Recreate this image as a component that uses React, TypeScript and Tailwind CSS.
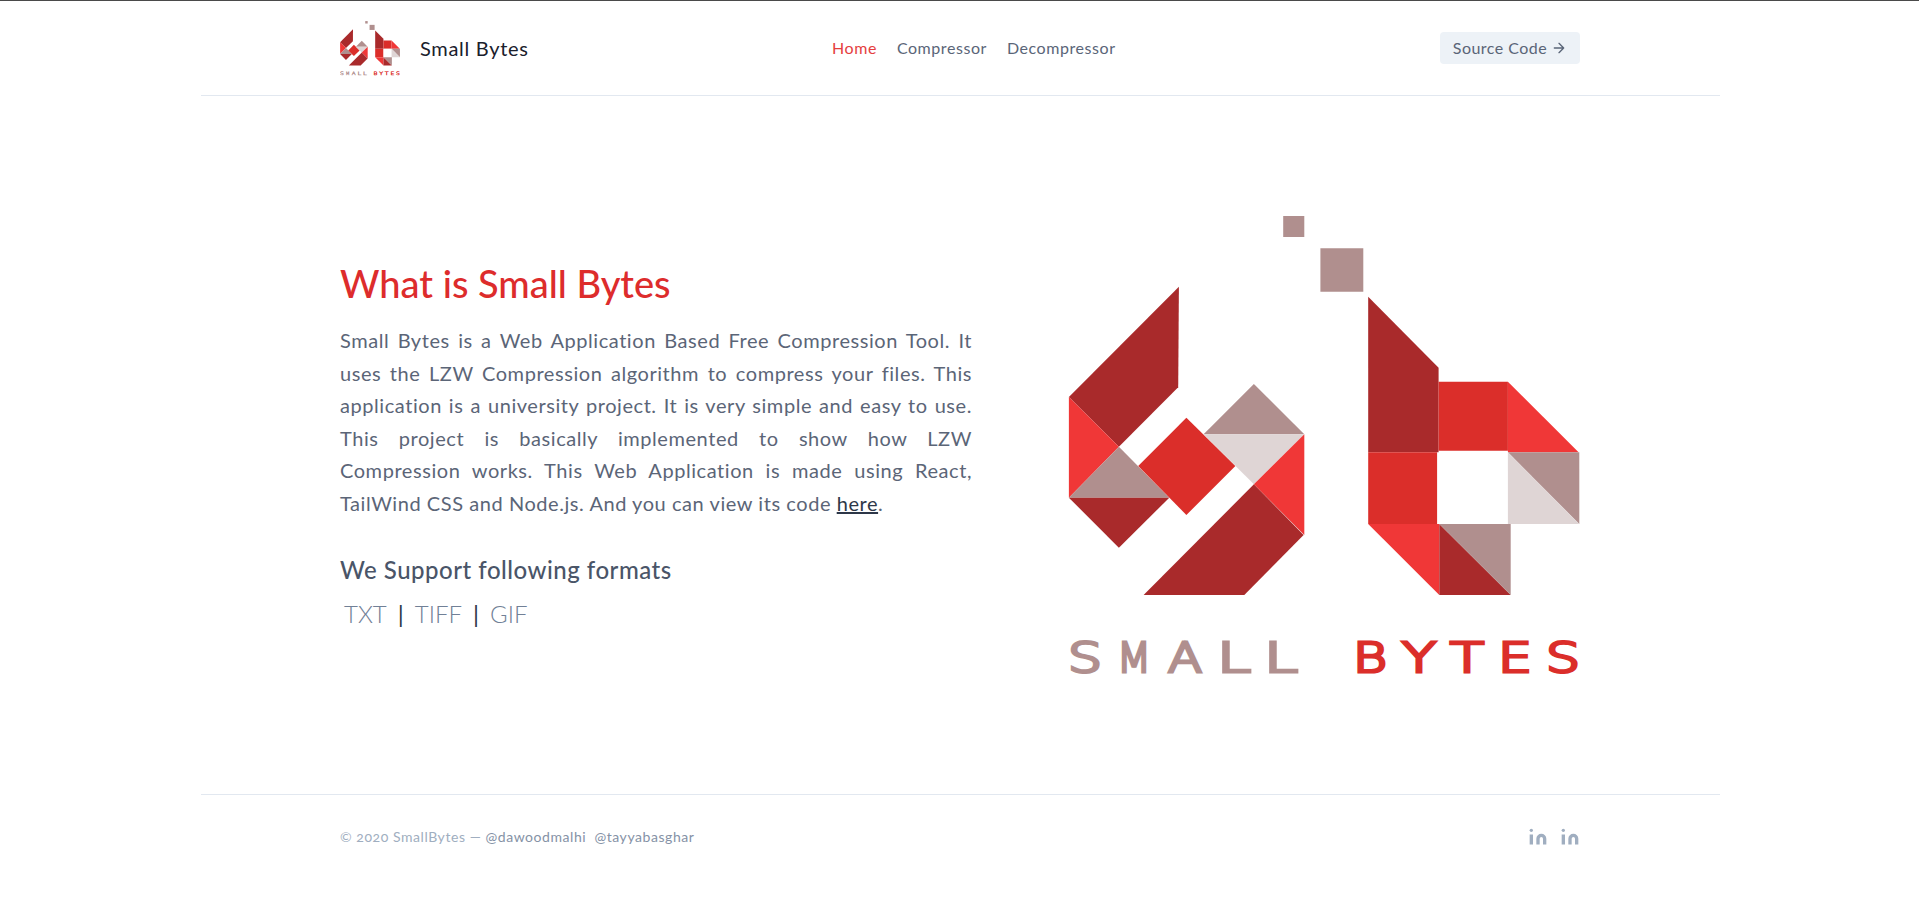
const dark = '#a92a2b'
const red = '#db2e2a'
const bright = '#f03737'
const taupe = '#b08f8e'
const pale = '#dfd5d5'

const shapes: [string, string][] = [
  [dark, '1178.9,286.7 1178.2,387.3 1118.9,446.7 1068.9,397'],
  [bright, '1068.9,397 1118.9,446.7 1068.9,497.7'],
  [taupe, '1118.9,446.7 1169.3,497.7 1068.9,497.7'],
  [dark, '1068.9,497.7 1169.3,497.7 1118.9,547.7'],
  [red, '1186.4,417.7 1235.4,466 1186.4,515 1138.2,466'],
  [taupe, '1253.9,384 1304.3,434.3 1203.6,434.3'],
  [pale, '1203.6,434.3 1304.3,434.3 1253.9,484.3'],
  [bright, '1304.3,434.3 1304.3,535 1253.9,484.3'],
  [dark, '1253.9,484.3 1303.6,535 1244.3,595 1143.6,595'],
  [dark, '1368.2,296.7 1438.6,367.7 1438.6,452.3 1368.2,452.3'],
  [red, '1438.6,381.7 1507.9,381.7 1507.9,450.7 1438.6,450.7'],
  [bright, '1507.9,381.7 1578.6,452.3 1507.9,452.3'],
  [taupe, '1507.9,452.3 1579.3,452.3 1579.3,524'],
  [pale, '1507.9,452.3 1579.3,524 1507.9,524'],
  [red, '1368.2,452.3 1437.1,452.3 1437.1,524 1368.2,524'],
  [bright, '1368.2,524 1439.3,524 1439.3,595'],
  [dark, '1439.3,524 1510.7,595 1439.3,595'],
  [taupe, '1439.3,524 1510.7,524 1510.7,595'],
  [taupe, '1283.2,216 1304.3,216 1304.3,237 1283.2,237'],
  [taupe, '1320.4,248.3 1363.3,248.3 1363.3,291.7 1320.4,291.7'],
]

const letters: [string, number, string][] = [
  ['S', 1068, taupe],
  ['M', 1117, taupe],
  ['A', 1168, taupe],
  ['L', 1217, taupe],
  ['L', 1264, taupe],
  ['B', 1353, red],
  ['Y', 1402, red],
  ['T', 1450, red],
  ['E', 1498, red],
  ['S', 1546, red],
]

function Logo({ className }: { className: string }) {
  return (
    <svg viewBox="1068 216 512 468" className={className}>
      {shapes.map(([fill, points]) => (
        <polygon key={points} fill={fill} points={points} />
      ))}
      {letters.map(([ch, x, fill]) => (
        <text
          key={x}
          x={x}
          y={672}
          fill={fill}
          stroke={fill}
          strokeWidth={3}
          fontFamily="'DejaVu Sans', sans-serif"
          fontSize={40}
          textLength={34}
          lengthAdjust="spacingAndGlyphs"
        >
          {ch}
        </text>
      ))}
    </svg>
  )
}

function Linkedin() {
  return (
    <svg viewBox="0 0 24 24" fill="currentColor" className="w-5 h-5">
      <path d="M16 8a6 6 0 016 6v7h-4v-7a2 2 0 00-2-2 2 2 0 00-2 2v7h-4v-7a6 6 0 016-6zM2 9h4v12H2z" />
      <circle cx="4" cy="4" r="2" />
    </svg>
  )
}

export default function App() {
  return (
    <div className="min-h-[912px] bg-white border-t border-[#4a4a4a] font-['Lato',sans-serif] font-light text-[#4a5568]">
      <div className="w-[1519px] ml-[201px]">
        <header className="border-b border-[#e2e8f0] pl-[139px] pr-[140px] h-[95px] flex items-center">
          <a href="#" className="w-[492px] flex items-center gap-5 text-xl text-[#1a202c] tracking-[0.035em]">
            <Logo className="w-[60px] h-[55px] mt-[1px]" />
            <span className="font-normal">Small Bytes</span>
          </a>
          <nav className="flex-1 flex items-center gap-5 text-base font-normal tracking-[0.035em] text-[#5a6578]">
            <a href="#" className="text-[#e53e3e]">Home</a>
            <a href="#">Compressor</a>
            <a href="#">Decompressor</a>
          </nav>
          <a href="#" className="w-[140px] h-8 flex items-center justify-center gap-1 rounded bg-[#edf2f7] text-base font-normal tracking-[0.03em] text-[#5a6578]">
            Source Code
            <svg viewBox="0 0 24 24" fill="none" stroke="currentColor" strokeWidth="2" strokeLinecap="round" strokeLinejoin="round" className="w-4 h-4">
              <path d="M5 12h14M12 5l7 7-7 7" />
            </svg>
          </a>
        </header>

        <main className="pl-[139px] pr-[140px] pt-[120px] pb-[110px] flex items-center justify-between">
          <div className="w-[632px] pt-[3px] pb-[10px]">
            <h1 className="text-[38px] leading-10 mb-[21px] text-[#dd2c2c] font-medium">What is Small Bytes</h1>
            <p className="text-xl font-normal leading-[32.5px] text-justify mb-[35px] tracking-[0.028em] text-[#5b6577]">
              Small Bytes is a Web Application Based Free Compression Tool. It uses the LZW Compression algorithm to compress your files. This application is a university project. It is very simple and easy to use. This project is basically implemented to show how LZW Compression works. This Web Application is made using React, TailWind CSS and Node.js. And you can view its code{' '}
              <a href="#" className="underline text-[#2d3748]">here</a>.
            </p>
            <h2 className="text-2xl font-medium text-[#4a5568] mb-3 tracking-[0.021em]">We Support following formats</h2>
            <div className="flex items-center gap-[11px] pl-1 text-2xl text-[#718096]">
              <span>TXT</span>
              <span className="text-[#2d3748] font-normal">|</span>
              <span>TIFF</span>
              <span className="text-[#2d3748] font-normal">|</span>
              <span>GIF</span>
            </div>
          </div>
          <Logo className="w-[512px] h-[468px]" />
        </main>

        <footer className="border-t border-[#e2e8f0] pl-[139px] pr-[140px] py-8 flex items-center justify-between">
          <p className="text-sm font-normal text-[#a0aec0] tracking-[0.04em] oldstyle-nums">
            © 2020 SmallBytes —{' '}
            <a href="#" className="text-[#8592a6]">@dawoodmalhi</a>
            {'  '}
            <a href="#" className="ml-1 text-[#8592a6]">@tayyabasghar</a>
          </p>
          <div className="flex items-center gap-3 text-[#a0aec0]">
            <Linkedin />
            <Linkedin />
          </div>
        </footer>
      </div>
    </div>
  )
}
